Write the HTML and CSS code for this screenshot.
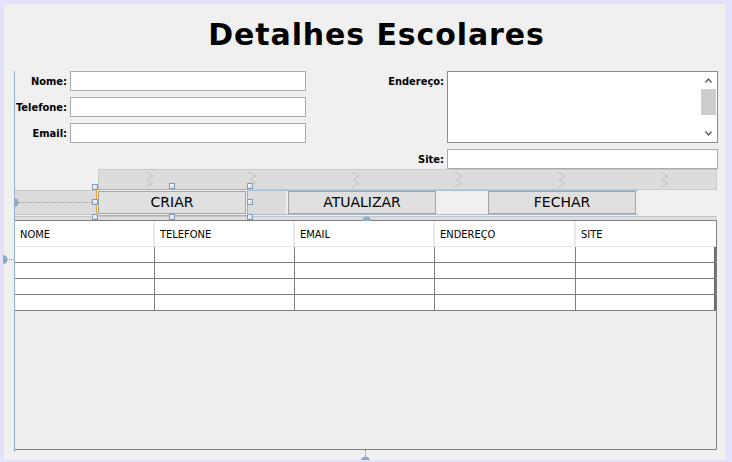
FILE: index.html
```html
<!DOCTYPE html>
<html>
<head>
<meta charset="utf-8">
<link rel="stylesheet" href="styles.css">
</head>
<body>
<div class="frame">
  <h1 class="title">Detalhes Escolares</h1>
  <div class="panel">
    <div class="form">
      <label class="lbl c1 r1">Nome:</label>
      <input class="fld c2 r1" type="text">
      <label class="lbl c3 r1">Endereço:</label>
      <div class="area">
        <div class="sbar">
          <div class="arrow"><svg width="7" height="5" viewBox="0 0 7 5"><polyline points="0.5,4.5 3.5,1 6.5,4.5" fill="none" stroke="#555" stroke-width="1.2"/></svg></div>
          <div class="thumb"></div>
          <div class="track"></div>
          <div class="arrow"><svg width="7" height="5" viewBox="0 0 7 5"><polyline points="0.5,0.5 3.5,4 6.5,0.5" fill="none" stroke="#555" stroke-width="1.2"/></svg></div>
        </div>
      </div>
      <label class="lbl c1 r2">Telefone:</label>
      <input class="fld c2 r2" type="text">
      <label class="lbl c1 r3">Email:</label>
      <input class="fld c2 r3" type="text">
      <label class="lbl c3 r4">Site:</label>
      <input class="fld c4 r4" type="text">
    </div>
    <div class="band">
      <svg class="chev" width="9" height="17" viewBox="0 0 9 17"><polyline points="1,1 8,5 2,8.5 8,12 1,16" fill="none" stroke="#c2c2c2"/></svg>
      <svg class="chev" width="9" height="17" viewBox="0 0 9 17"><polyline points="1,1 8,5 2,8.5 8,12 1,16" fill="none" stroke="#c2c2c2"/></svg>
      <svg class="chev" width="9" height="17" viewBox="0 0 9 17"><polyline points="1,1 8,5 2,8.5 8,12 1,16" fill="none" stroke="#c2c2c2"/></svg>
      <svg class="chev" width="9" height="17" viewBox="0 0 9 17"><polyline points="1,1 8,5 2,8.5 8,12 1,16" fill="none" stroke="#c2c2c2"/></svg>
      <svg class="chev" width="9" height="17" viewBox="0 0 9 17"><polyline points="1,1 8,5 2,8.5 8,12 1,16" fill="none" stroke="#c2c2c2"/></svg>
      <svg class="chev" width="9" height="17" viewBox="0 0 9 17"><polyline points="1,1 8,5 2,8.5 8,12 1,16" fill="none" stroke="#c2c2c2"/></svg>
    </div>
    <div class="btnrow">
      <div class="seg s1"></div>
      <div class="sel"><div class="btn">CRIAR</div></div>
      <div class="grp">
        <div class="seg s2"></div>
        <div class="btn">ATUALIZAR</div>
        <div class="gap3"></div>
        <div class="btn">FECHAR</div>
        <div class="gap4"></div>
      </div>
    </div>
    <div class="strip"></div>
    <div class="pane">
      <div class="thead">
        <div class="th">NOME</div>
        <div class="th">TELEFONE</div>
        <div class="th">EMAIL</div>
        <div class="th">ENDEREÇO</div>
        <div class="th last">SITE</div>
      </div>
      <div class="trow"><div class="td"></div><div class="td"></div><div class="td"></div><div class="td"></div><div class="td last"></div></div>
      <div class="trow"><div class="td"></div><div class="td"></div><div class="td"></div><div class="td"></div><div class="td last"></div></div>
      <div class="trow"><div class="td"></div><div class="td"></div><div class="td"></div><div class="td"></div><div class="td last"></div></div>
      <div class="trow"><div class="td"></div><div class="td"></div><div class="td"></div><div class="td"></div><div class="td last"></div></div>
    </div>
  </div>

  <div class="handle h1"></div>
  <div class="handle h2"></div>
  <div class="handle h3"></div>
  <div class="handle h4"></div>
  <div class="handle h5"></div>
  <div class="handle h6"></div>
  <div class="handle h7"></div>
  <div class="handle h8"></div>

  <svg class="anchor a1" width="5" height="9" viewBox="0 0 5 9"><path d="M0 0 A4.5 4.5 0 0 1 0 9 Z" fill="#8eaacb"/></svg>
  <div class="dots dl1"></div>
  <svg class="anchor a2" width="5" height="9" viewBox="0 0 5 9"><path d="M0 0 A4.5 4.5 0 0 1 0 9 Z" fill="#8eaacb"/></svg>
  <div class="dots dl2"></div>
  <svg class="anchor a3" width="9" height="5" viewBox="0 0 9 5"><path d="M0 5 A4.5 4.5 0 0 1 9 5 Z" fill="#8eaacb"/></svg>
  <div class="vdots dl3"></div>
  <svg class="anchor a4" width="9" height="5" viewBox="0 0 9 5"><path d="M0 5 A4.5 4.5 0 0 1 9 5 Z" fill="#8eaacb"/></svg>
</div>
</body>
</html>
```

FILE: styles.css
```css
* { box-sizing: border-box; }

body {
  margin: 0;
  background: #e2e2fc;
  font-family: "DejaVu Sans", sans-serif;
  color: #000;
}

.frame {
  position: relative;
  margin: 4px 6px 0 4px;
  height: 456px;
  background: #f0f0f0;
}

.title {
  margin: 0;
  padding: 16px 0 21px 23px;
  font: bold 30px/30px "DejaVu Sans", sans-serif;
  letter-spacing: 0.9px;
  text-align: center;
}

.panel {
  margin-left: 10px;
  width: 704px;
  border-left: 1px solid #8fb2d5;
  padding-bottom: 2px;
}

.form {
  display: grid;
  grid-template-columns: 55px 236px 141px 271px;
  grid-template-rows: repeat(4, 20px);
  row-gap: 6px;
}

.lbl {
  display: flex;
  justify-content: flex-end;
  align-items: center;
  padding-right: 3px;
  font: bold 11px "DejaVu Sans Condensed", "DejaVu Sans", sans-serif;
  white-space: nowrap;
}

.c1 { grid-column: 1; }
.c2 { grid-column: 2; }
.c3 { grid-column: 3; }
.c4 { grid-column: 4; }
.r1 { grid-row: 1; }
.r2 { grid-row: 2; }
.r3 { grid-row: 3; }
.r4 { grid-row: 4; }

.fld {
  display: block;
  width: 100%;
  height: 20px;
  margin: 0;
  padding: 0;
  border: 1px solid #a9a9a9;
  background: #fff;
  outline: none;
}

.area {
  grid-column: 4;
  grid-row: 1 / 4;
  border: 1px solid #8b8b8b;
  background: #fff;
  display: flex;
  justify-content: flex-end;
}

.sbar {
  width: 16px;
  display: flex;
  flex-direction: column;
}

.arrow {
  height: 17px;
  display: flex;
  align-items: center;
  justify-content: center;
  padding-right: 1px;
}

.thumb {
  height: 26px;
  margin-right: 1px;
  background: #cdcdcd;
}

.track { flex: 1; }

.band {
  margin-left: 83px;
  width: 619px;
  height: 21px;
  background: #dcdcdc;
  border: 1px solid #c8c8c8;
  display: flex;
  align-items: center;
  padding-left: 46px;
  gap: 94px;
}

.chev { flex: none; }

.btnrow {
  display: flex;
  height: 25px;
}

.seg {
  background: #dcdcdc;
  border-top: 1px solid #c6c6c6;
  border-bottom: 1px solid #c6c6c6;
}

.s1 { width: 81px; }

.sel {
  width: 152px;
  height: 27px;
  margin-top: -1px;
  border: 1px solid #f5a41e;
  padding: 1px;
}

.sel .btn { width: 100%; }

.btn {
  width: 148px;
  height: 23px;
  background: #e0e0e0;
  border: 1px solid #a3a3a3;
  font: 14px/21px "DejaVu Sans", sans-serif;
  text-align: center;
}

.grp {
  display: flex;
  border-top: 1px solid #a9bed3;
  border-bottom: 1px solid #a9bed3;
  background: #f0f0f0;
}

.s2 {
  width: 40px;
  border: none;
  border-right: 2px solid #ececec;
}

.gap3 { width: 52px; }
.gap4 { width: 2px; }

.strip {
  margin-top: 1px;
  width: 702px;
  height: 4px;
  background: #dcdcdc;
  border-top: 1px solid #c6c6c6;
}

.pane {
  width: 702px;
  height: 230px;
  border-top: 1px solid #808080;
  border-right: 1px solid #808080;
  border-bottom: 1px solid #808080;
  background: #eeeeee;
}

.thead, .trow {
  display: grid;
  grid-template-columns: 140px 140px 140px 141px 140px;
}

.th {
  height: 26px;
  background: #fff;
  border-right: 2px solid #e8e8e8;
  border-bottom: 1px solid #e6e6e6;
  padding: 2px 0 0 5px;
  font: 11px/23px "DejaVu Sans Condensed", "DejaVu Sans", sans-serif;
}

.th.last { border-right: none; }

.td {
  height: 16px;
  background: #fff;
  border-right: 1px solid #808080;
  border-bottom: 1px solid #808080;
}

.td.last { border-right: 2px solid #6e6e6e; }

.handle {
  position: absolute;
  width: 6px;
  height: 6px;
  border: 1px solid #7d9cbc;
  background: linear-gradient(135deg, #ffffff, #c9d7e6);
}

.h1 { left: 88px; top: 180px; }
.h2 { left: 165px; top: 179px; }
.h3 { left: 243px; top: 179px; }
.h4 { left: 88px; top: 195px; }
.h5 { left: 243px; top: 195px; }
.h6 { left: 88px; top: 210px; }
.h7 { left: 165px; top: 210px; }
.h8 { left: 243px; top: 210px; }

.anchor { position: absolute; }
.a1 { left: 10px; top: 194px; }
.a2 { left: -1px; top: 251px; }
.a3 { left: 358px; top: 212px; }
.a4 { left: 357px; top: 452px; }

.dots {
  position: absolute;
  height: 0;
  border-top: 1px dotted #7f9fc0;
}

.dl1 { left: 14px; top: 198px; width: 74px; }
.dl2 { left: 3px; top: 255px; width: 7px; }

.vdots {
  position: absolute;
  width: 0;
  border-left: 1px dotted #7f9fc0;
}

.dl3 { left: 361px; top: 446px; height: 6px; }
```
